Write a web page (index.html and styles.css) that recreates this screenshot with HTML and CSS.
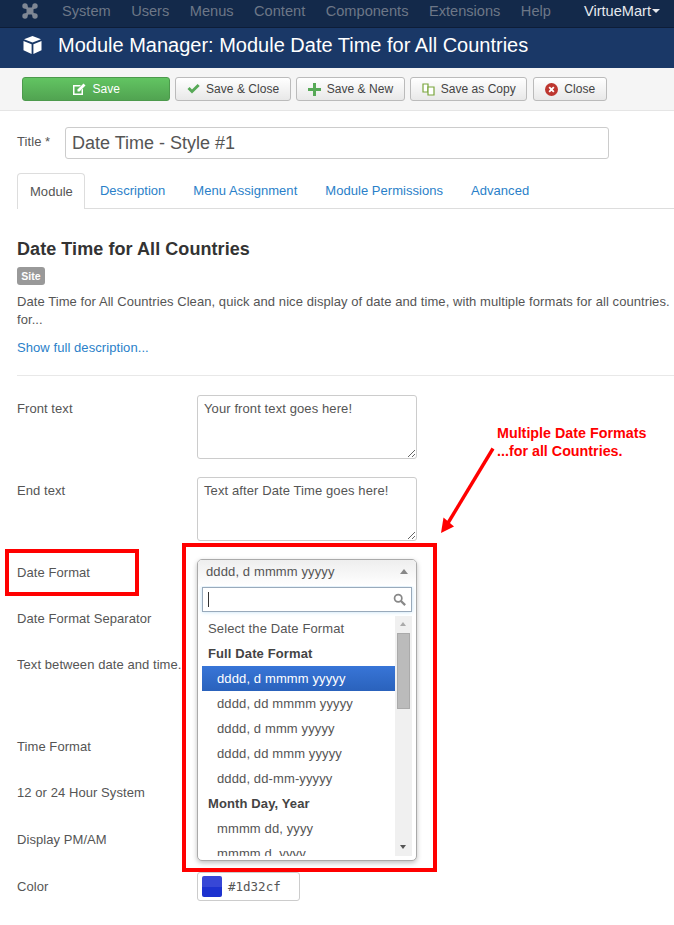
FILE: index.html
```html
<!DOCTYPE html>
<html lang="en">
<head>
    <meta charset="UTF-8">
    <title>Module Manager</title>
    <link rel="stylesheet" href="styles.css">
</head>
<body>
<nav class="navbar">
    <svg class="joomla" width="16" height="16" viewBox="0 0 16 16"><path fill="none" stroke="#7f8794" stroke-width="3" d="M4 4L12 12M12 4L4 12"/><path fill="none" stroke="#7f8794" stroke-width="1.4" d="M5 8L8 5L11 8L8 11Z"/><g fill="#7f8794"><circle cx="3" cy="3" r="2.7"/><circle cx="13" cy="3" r="2.7"/><circle cx="3" cy="13" r="2.7"/><circle cx="13" cy="13" r="2.7"/></g></svg>
    <ul class="menu">
        <li>System</li>
        <li>Users</li>
        <li>Menus</li>
        <li>Content</li>
        <li>Components</li>
        <li>Extensions</li>
        <li>Help</li>
    </ul>
    <div class="vm">VirtueMart<span class="caret"></span></div>
</nav>
<header class="subhead">
    <svg width="19" height="18" viewBox="0 0 19 18"><path fill="#fff" d="M9.5 0L18 3.2L9.5 6.6L1 3.2Z"/><path fill="#fff" d="M0.5 5L8.6 8.2V18L0.5 14.2ZM18.5 5L10.4 8.2V18L18.5 14.2Z"/></svg>
    <h1>Module Manager: Module Date Time for All Countries</h1>
</header>
<div class="toolbar">
    <button class="btn btn-save">
        <svg width="14" height="13" viewBox="0 0 14 13"><path fill="#fff" d="M1 2H9L7.5 3.5H2.5V10.5H9.5V7L11 5.5V12H1Z"/><path fill="#fff" d="M11.5 0.5L13.5 2.5L7.5 8.5H5.5V6.5Z"/></svg>
        Save
    </button>
    <button class="btn">
        <svg width="13" height="12" viewBox="0 0 13 12"><path fill="#57a957" d="M0.5 6L2.6 4L5 6.4L10.6 1L12.7 3L5 10.5Z"/></svg>
        Save &amp; Close
    </button>
    <button class="btn">
        <svg width="13" height="13" viewBox="0 0 13 13"><path fill="#57a957" d="M5 0H8V5H13V8H8V13H5V8H0V5H5Z"/></svg>
        Save &amp; New
    </button>
    <button class="btn">
        <svg width="13" height="13" viewBox="0 0 13 13"><g fill="#fff" stroke="#7aa63c" stroke-width="1.2"><path d="M1 1H6V9H1Z"/><path d="M6 4H12V12H6Z"/></g></svg>
        Save as Copy
    </button>
    <button class="btn btn-close">
        <svg width="13" height="13" viewBox="0 0 14 14"><circle cx="7" cy="7" r="7" fill="#bd362f"/><path stroke="#fff" stroke-width="2" d="M4.5 4.5L9.5 9.5M9.5 4.5L4.5 9.5"/></svg>
        Close
    </button>
</div>
<main class="content">
    <div class="title-row">
        <label>Title *</label>
        <input class="title-input" type="text" value="Date Time - Style #1">
    </div>
    <ul class="tabs">
        <li class="current">Module</li>
        <li>Description</li>
        <li>Menu Assignment</li>
        <li>Module Permissions</li>
        <li>Advanced</li>
    </ul>
    <h3>Date Time for All Countries</h3>
    <span class="badge">Site</span>
    <p class="desc">Date Time for All Countries Clean, quick and nice display of date and time, with multiple formats for all countries. for...</p>
    <a class="more">Show full description...</a>
    <hr>
    <div class="row row-area"><label>Front text</label><textarea class="textarea">Your front text goes here!</textarea></div>
    <div class="row row-area"><label>End text</label><textarea class="textarea">Text after Date Time goes here!</textarea></div>
    <div class="row"><label>Date Format</label></div>
    <div class="row"><label>Date Format Separator</label></div>
    <div class="row row-area"><label>Text between date and time.</label></div>
    <div class="row"><label>Time Format</label></div>
    <div class="row row-wide"><label>12 or 24 Hour System</label></div>
    <div class="row row-wide"><label>Display PM/AM</label></div>
    <div class="row">
        <label>Color</label>
        <div class="color-input"><span class="swatch"></span>#1d32cf</div>
    </div>
</main>

<!-- 下拉框 -->
<div class="chosen">
    <div class="chosen-head">dddd, d mmmm yyyyy<span class="arrow-up"></span></div>
    <div class="chosen-search">
        <span class="cursor"></span>
        <svg width="13" height="13" viewBox="0 0 15 15"><circle cx="6" cy="6" r="4.2" fill="none" stroke="#888" stroke-width="2"/><path stroke="#888" stroke-width="2.6" d="M9.2 9.2L14 14"/></svg>
    </div>
    <div class="chosen-body">
        <ul class="chosen-list">
            <li>Select the Date Format</li>
            <li class="group">Full Date Format</li>
            <li class="sub active">dddd, d mmmm yyyyy</li>
            <li class="sub">dddd, dd mmmm yyyyy</li>
            <li class="sub">dddd, d mmm yyyyy</li>
            <li class="sub">dddd, dd mmm yyyyy</li>
            <li class="sub">dddd, dd-mm-yyyyy</li>
            <li class="group">Month Day, Year</li>
            <li class="sub">mmmm dd, yyyy</li>
            <li class="sub cut">mmmm d, yyyy</li>
        </ul>
        <div class="scrollbar">
            <span class="tri-up"></span>
            <span class="thumb"></span>
            <span class="tri-down"></span>
        </div>
    </div>
</div>

<!-- 红色标注 -->
<div class="mark mark-label"></div>
<div class="mark mark-select"></div>
<div class="note">Multiple Date Formats<br>...for all Countries.</div>
<svg class="note-arrow" width="56" height="90" viewBox="0 0 56 90"><path stroke="#f00" stroke-width="3.4" d="M53 1.5L8 76"/><path fill="#f00" d="M1 86L3.5 70.5L14 79.5Z"/></svg>
</body>
</html>
```

FILE: styles.css
```css
*{
    box-sizing: border-box;
}
body{
    margin: 0;
    font-family: "Liberation Sans", Arial, sans-serif;
    font-size: 13px;
    letter-spacing: 0.07px;
    color: #555;
    background: #fff;
    overflow-x: hidden;
}
ul{
    list-style: none;
    margin: 0;
    padding: 0;
}
/*顶部导航*/
.navbar{
    height: 28px;
    background: #13294a;
    border-bottom: 1px solid #0d1d38;
    display: flex;
    align-items: center;
    padding: 0 0 5px 22px;
    font-size: 14.6px;
    letter-spacing: 0;
}
.joomla{
    margin-right: 24px;
}
.menu{
    display: flex;
    gap: 20.5px;
    color: #6d7787;
}
.vm{
    margin-left: auto;
    margin-right: 14px;
    color: #e6e9ee;
    display: flex;
    align-items: center;
}
.caret{
    width: 0;
    height: 0;
    margin-left: 1px;
    border: 4px solid transparent;
    border-top-color: #e6e9ee;
    border-bottom: 0;
}
/*标题栏*/
.subhead{
    height: 40px;
    background: #1a3867;
    display: flex;
    align-items: center;
    padding: 0 0 6px 23px;
    color: #fff;
}
.subhead h1{
    margin: 0 0 0 16px;
    font-size: 20px;
    font-weight: normal;
    letter-spacing: 0;
    line-height: 34px;
}
/*工具栏*/
.toolbar{
    height: 43px;
    background: #f5f5f5;
    border-bottom: 1px solid #e5e5e5;
    display: flex;
    gap: 5px;
    padding: 9px 0 0 22px;
}
.btn{
    height: 24px;
    padding: 0 10.5px 0 11px;
    display: flex;
    align-items: center;
    gap: 6px;
    font: 12px "Liberation Sans", Arial, sans-serif;
    letter-spacing: 0.04px;
    color: #444;
    background: linear-gradient(#fff, #e8e8e8);
    border: 1px solid #bbb;
    border-radius: 3px;
}
.btn-save{
    width: 148px;
    justify-content: center;
    color: #fff;
    background: linear-gradient(#62c462, #51a351);
    border-color: #4c9a4c;
}
.btn-close{
    margin-left: 1px;
}
/*内容*/
.content{
    padding: 16px 0 0 17px;
}
.title-row{
    display: flex;
    align-items: flex-start;
}
.title-row label{
    width: 48px;
    padding-top: 7px;
    font-size: 13px;
}
.title-input{
    width: 544px;
    height: 32px;
    padding: 0 6px;
    font: 18px "Liberation Sans", Arial, sans-serif;
    color: #555;
    border: 1px solid #ccc;
    border-radius: 3px;
}
.tabs{
    display: flex;
    height: 36px;
    margin-top: 14px;
    border-bottom: 1px solid #ddd;
    color: #2a7fc9;
    letter-spacing: 0.04px;
}
.tabs li{
    padding: 9px 13px 0;
    margin-right: 2px;
    line-height: 18px;
}
.tabs li.current{
    height: 36px;
    padding: 9px 11px 0 12px;
    color: #555;
    background: #fff;
    border: 1px solid #ddd;
    border-bottom: 0;
    border-radius: 4px 4px 0 0;
}
h3{
    margin: 29px 0 0;
    font-size: 18px;
    line-height: 22px;
    color: #333;
}
.badge{
    display: block;
    width: 28px;
    height: 18px;
    margin-top: 7px;
    background: #999;
    border-radius: 3px;
    color: #fff;
    font-size: 10.5px;
    font-weight: bold;
    line-height: 18px;
    text-align: center;
}
.desc{
    margin: 8px 0 0;
    width: 657px;
    line-height: 18px;
}
.more{
    display: block;
    margin-top: 10px;
    line-height: 18px;
    color: #2a7fc9;
}
hr{
    margin: 18px 0 19px;
    border: 0;
    border-top: 1px solid #e8e8e8;
}
.row{
    display: flex;
    height: 28px;
    margin-bottom: 18px;
}
.row label{
    width: 180px;
    padding-top: 5px;
    line-height: 18px;
    white-space: nowrap;
}
.row-area{
    height: 64px;
}
.row-wide{
    height: 29px;
}
.textarea{
    width: 220px;
    height: 64px;
    padding: 4px 6px;
    font: 13px/18px "Liberation Sans", Arial, sans-serif;
    letter-spacing: 0.1px;
    color: #555;
    border: 1px solid #ccc;
    border-radius: 3px;
}
.color-input{
    width: 103px;
    height: 29px;
    margin-top: -1px;
    display: flex;
    align-items: center;
    padding-left: 4px;
    gap: 6px;
    font-family: "DejaVu Sans Mono", monospace;
    font-size: 12.5px;
    letter-spacing: 0;
    border: 1px solid #ccc;
    border-radius: 3px;
}
.swatch{
    width: 20px;
    height: 21px;
    border-radius: 2px;
    background: linear-gradient(#3747d6 50%, #1d32cf 50%);
}
/*下拉框*/
.chosen{
    position: absolute;
    left: 197px;
    top: 559px;
    width: 220px;
    height: 302px;
    letter-spacing: 0.12px;
    background: #fff;
    border: 1px solid #aaa;
    border-radius: 5px;
    box-shadow: 0 2px 5px rgba(0,0,0,0.25);
    overflow: hidden;
}
.chosen-head{
    height: 26px;
    padding-left: 8px;
    line-height: 24px;
    position: relative;
    background: linear-gradient(#eee, #fff);
}
.arrow-up{
    position: absolute;
    right: 8px;
    top: 9px;
    border: 4px solid transparent;
    border-top: 0;
    border-bottom: 5px solid #888;
}
.chosen-search{
    height: 25px;
    margin: 1px 4px 0;
    border: 1px solid #9ab;
    box-shadow: 0 0 4px #bfe0f5;
    display: flex;
    align-items: center;
    justify-content: space-between;
    padding: 0 5px 0 5px;
}
.cursor{
    width: 1px;
    height: 15px;
    background: #333;
}
.chosen-body{
    display: flex;
    height: 240px;
    margin: 4px 4px 0;
}
.chosen-list{
    width: 193px;
    height: 240px;
    overflow: hidden;
}
.chosen-list li{
    height: 25px;
    padding-left: 6px;
    line-height: 25px;
    white-space: nowrap;
}
.chosen-list li.group{
    font-weight: bold;
    color: #444;
}
.chosen-list li.sub{
    padding-left: 15px;
}
.chosen-list li.active{
    color: #fff;
    background: linear-gradient(#3875d7, #2a62bc);
}
.scrollbar{
    width: 17px;
    height: 240px;
    background: #f0f0f0;
    position: relative;
}
.thumb{
    position: absolute;
    left: 2px;
    top: 17px;
    width: 13px;
    height: 76px;
    background: #bbb;
    border: 1px solid #aaa;
}
.tri-up{
    position: absolute;
    left: 5px;
    top: 6px;
    border: 3.5px solid transparent;
    border-top: 0;
    border-bottom: 4px solid #aaa;
}
.tri-down{
    position: absolute;
    left: 5px;
    bottom: 7px;
    border: 3.5px solid transparent;
    border-bottom: 0;
    border-top: 4px solid #555;
}
/*红色标注*/
.mark{
    position: absolute;
    border: 4px solid #f00;
}
.mark-label{
    left: 5px;
    top: 549px;
    width: 134px;
    height: 47px;
}
.mark-select{
    left: 182px;
    top: 543px;
    width: 255px;
    height: 329px;
}
.note{
    position: absolute;
    left: 497px;
    top: 424px;
    color: #f00;
    font-size: 14.3px;
    font-weight: bold;
    letter-spacing: 0;
    line-height: 18px;
}
.note-arrow{
    position: absolute;
    left: 440px;
    top: 447px;
}
```
